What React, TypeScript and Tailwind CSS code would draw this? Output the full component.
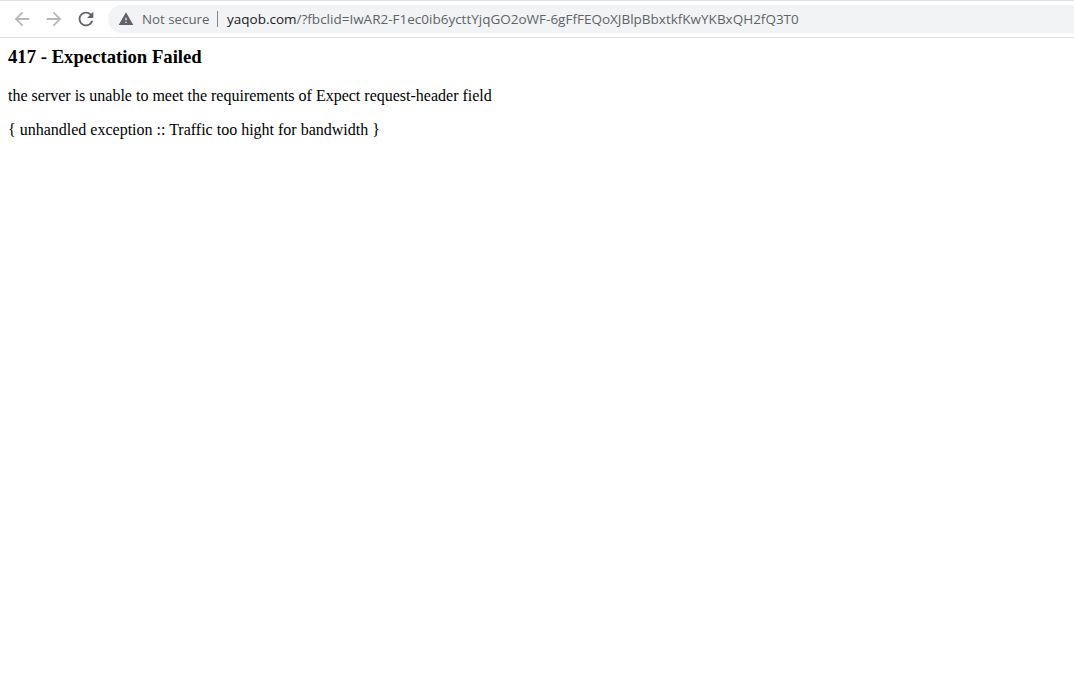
export default function App() {
  return (
    <div className="min-h-screen bg-white font-['Liberation_Serif',serif] text-black">
      <div className="flex h-[38px] items-center border-t-[1px] border-b-[1px] border-[#dee1e6] bg-white font-['Open_Sans',sans-serif]">
        <div className="flex w-[108px] shrink-0 items-center">
          <svg className="ml-[11px] h-[22px] w-[22px]" viewBox="0 0 24 24" fill="#b5b7ba">
            <path d="M20 11H7.83l5.59-5.59L12 4l-8 8 8 8 1.41-1.41L7.83 13H20v-2z" />
          </svg>
          <svg className="ml-[10px] h-[22px] w-[22px]" viewBox="0 0 24 24" fill="#b5b7ba">
            <path d="M12 4l-1.41 1.41L16.17 11H4v2h12.17l-5.58 5.59L12 20l8-8z" />
          </svg>
          <svg className="ml-[10px] h-[22px] w-[22px]" viewBox="0 0 24 24" fill="#5f6368">
            <path d="M17.65 6.35A7.958 7.958 0 0 0 12 4c-4.42 0-7.99 3.58-7.99 8s3.57 8 7.99 8c3.73 0 6.84-2.55 7.73-6h-2.08A5.99 5.99 0 0 1 12 18c-3.31 0-6-2.69-6-6s2.69-6 6-6c1.66 0 3.14.69 4.22 1.78L13 11h7V4l-2.35 2.35z" />
          </svg>
        </div>
        <div className="flex h-[28px] flex-1 items-center rounded-l-[14px] bg-[#f1f3f4] pl-[10px] text-[13.5px] whitespace-nowrap">
          <svg className="h-[16px] w-[16px]" viewBox="0 0 24 24" fill="#5f6368">
            <path d="M1 21h22L12 2 1 21zm12-3h-2v-2h2v2zm0-4h-2v-4h2v4z" />
          </svg>
          <span className="ml-[8px] w-[67px] pt-px text-[13.3px] text-[#5f6368]">Not secure</span>
          <span className="mr-[9px] ml-[8px] h-[16px] w-px bg-[#80868b]" />
          <span className="text-[#202124]">yaqob.com</span>
          <span className="text-[#5f6368]">/?fbclid=IwAR2-F1ec0ib6ycttYjqGO2oWF-6gFfFEQoXJBlpBbxtkfKwYKBxQH2fQ3T0</span>
        </div>
      </div>
      <div className="px-2">
        <h3 className="mt-[8px] text-[18.72px] leading-[21px] font-bold">417 - Expectation Failed</h3>
        <p className="mt-[20px] text-[16px] leading-[18px]">the server is unable to meet the requirements of Expect request-header field</p>
        <p className="mt-[16px] text-[16px] leading-[18px]">{'{ unhandled exception :: Traffic too hight for bandwidth }'}</p>
      </div>
    </div>
  );
}
